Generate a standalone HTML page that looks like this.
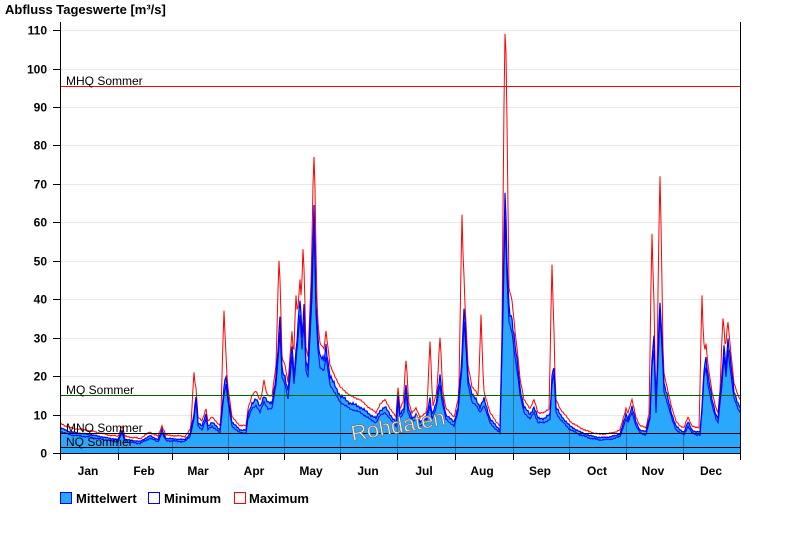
<!DOCTYPE html>
<html><head><meta charset="utf-8"><style>
body{margin:0;background:#fff;width:800px;height:550px;overflow:hidden;font-family:"Liberation Sans",Arial,sans-serif}
</style></head><body>
<svg id="s" width="800" height="550" xmlns="http://www.w3.org/2000/svg" style="position:absolute;left:0;top:0">
<text x="5" y="14" font-size="13" font-weight="bold" font-family="Liberation Sans">Abfluss Tageswerte [m³/s]</text>
<g id="grid" stroke="#e8e8e8" stroke-width="1"></g>
<g id="ylab" font-size="12" font-weight="bold" text-anchor="end" font-family="Liberation Sans"></g>
<defs><clipPath id="cp"><path id="cpp"/></clipPath></defs>
<path id="fill" fill="#29a8fc" stroke="none"/>
<g id="vl" clip-path="url(#cp)" stroke="#2f6f9f" stroke-width="1"></g>
<path id="pmax" fill="none" stroke="#ff0000" stroke-width="1"/>
<path id="pmin" fill="none" stroke="#0000ff" stroke-width="1"/>
<path id="pmean" fill="none" stroke="#0000ff" stroke-width="1.2"/>
<line x1="60" x2="740" y1="86.5" y2="86.5" stroke="#ff0000"/>
<line x1="60" x2="740" y1="395.5" y2="395.5" stroke="#006400"/>
<line x1="60" x2="740" y1="433.5" y2="433.5" stroke="#000"/>
<line x1="60" x2="740" y1="447.5" y2="447.5" stroke="#000"/>
<g font-size="12" font-family="Liberation Sans">
<text x="66" y="85">MHQ Sommer</text>
<text x="66" y="394">MQ Sommer</text>
<text x="66" y="432">MNQ Sommer</text>
<text x="66" y="446">NQ Sommer</text>
</g>
<text x="398" y="433" font-size="22" fill="#fff" stroke="#777" stroke-width="0.9" text-anchor="middle" transform="rotate(-10 398 425)" font-family="Liberation Sans">Rohdaten</text>
<line x1="60.5" y1="22" x2="60.5" y2="460" stroke="#000"/>
<line x1="740.5" y1="22" x2="740.5" y2="453" stroke="#000"/>
<line x1="60" y1="453.5" x2="741" y2="453.5" stroke="#000"/>
<g id="ticks" stroke="#000"></g>
<g font-size="12" font-weight="bold" text-anchor="middle" font-family="Liberation Sans">
<text x="88" y="475">Jan</text><text x="144" y="475">Feb</text><text x="198" y="475">Mar</text><text x="254" y="475">Apr</text><text x="311" y="475">May</text><text x="368" y="475">Jun</text><text x="424" y="475">Jul</text><text x="482" y="475">Aug</text><text x="540" y="475">Sep</text><text x="597" y="475">Oct</text><text x="653" y="475">Nov</text><text x="711" y="475">Dec</text>
</g>
<rect x="60.5" y="492.5" width="11" height="11" fill="#29a8fc" stroke="#0000ff"/>
<rect x="148.5" y="492.5" width="11" height="11" fill="#fff" stroke="#0000ff"/>
<rect x="234.5" y="492.5" width="11" height="11" fill="#fff" stroke="#ff0000"/>
<g font-size="13" font-weight="bold" font-family="Liberation Sans">
<text x="76" y="503">Mittelwert</text><text x="164" y="503">Minimum</text><text x="249" y="503">Maximum</text>
</g>
</svg>
<script>
var Y=function(v){return 453-3.845*v};
var g=document.getElementById('grid'),yl=document.getElementById('ylab'),tk=document.getElementById('ticks');
var ns='http://www.w3.org/2000/svg';
function el(p,t,a){var e=document.createElementNS(ns,t);for(var k in a)e.setAttribute(k,a[k]);p.appendChild(e);return e}
for(var v=0;v<=110;v+=10){var y=Math.round(Y(v))+0.5;if(v>0)el(g,'line',{x1:61,x2:740,y1:y,y2:y});el(tk,'line',{x1:53,x2:60,y1:y,y2:y});var t=el(yl,'text',{x:47,y:y+4});t.textContent=v;}
var mb=[60,118,172,228,284,340,397,455,513,569,626,683,740];
var vl=document.getElementById('vl');
mb.forEach(function(x){el(tk,'line',{x1:x+0.5,x2:x+0.5,y1:453,y2:460});if(x>60&&x<740)el(vl,'line',{x1:x+0.5,x2:x+0.5,y1:20,y2:453});});
var K=[[60,6.5],[70,5.5],[90,4.8],[110,3.8],[118,3.5],[122,6],[125,3.5],[140,3],[150,4.5],[158,3.5],[162,6],[166,3.8],[185,3.5],[190,5],[194,10],[196,15],[198,8],[202,7],[206,10],[208,7],[212,8],[216,7],[220,6],[224,17],[226,20],[228,15],[232,8],[240,6],[246,6],[248,10],[252,13],[256,14],[260,12],[264,15],[268,13],[272,13],[276,20],[278,27],[280,35],[282,22],[285,20],[288,16],[290,22],[292,28],[294,20],[297,30],[300,40],[302,30],[304,38],[306,24],[308,22],[312,45],[314,65],[316,40],[318,30],[320,25],[324,24],[326,28],[330,20],[340,15],[350,13],[360,12],[370,10],[376,9],[380,11],[385,12],[390,10],[396,8],[398,15],[400,10],[404,12],[406,18],[408,12],[412,9],[416,10],[420,8],[426,9],[430,14],[432,10],[436,13],[440,20],[442,15],[446,10],[450,9],[454,8],[458,12],[462,25],[464,38],[466,30],[468,20],[472,15],[476,14],[480,12],[484,14],[490,9],[496,7],[500,6],[503,40],[505,68],[507,50],[509,38],[512,35],[515,28],[518,22],[520,17],[524,12],[530,10],[534,12],[538,9],[544,9],[550,10],[552,20],[554,23],[556,12],[560,10],[570,7],[580,5.5],[590,4.5],[600,4],[610,4.2],[615,4.5],[620,5],[626,10],[628,9],[632,12],[636,8],[640,6],[646,5.5],[650,10],[652,25],[654,30],[656,12],[660,40],[662,30],[664,18],[668,14],[672,10],[676,7],[680,6],[684,5.5],[688,8],[692,6],[696,5.5],[700,5.5],[702,12],[704,22],[706,25],[708,20],[712,14],[716,10],[718,9],[722,20],[724,28],[726,22],[728,30],[730,25],[734,16],[738,13],[740,12]];
var S=[[505,109],[506,104],[314,77],[660,72],[462,62],[303,53],[279,50],[552,49],[702,41],[723,35],[652,57],[224,37],[194,21],[430,29],[481,36],[296,41],[440,30],[406,24],[264,19],[727,32]];
function mean0(x){for(var i=1;i<K.length;i++){if(x<=K[i][0]){var a=K[i-1],b=K[i];return a[1]+(b[1]-a[1])*(x-a[0])/(b[0]-a[0]);}}return 12}
function nz(x){return Math.sin(x*2.3)*0.5+Math.sin(x*5.7+1)*0.3}
function mean(x){var m=mean0(x);return m*(1+0.05*nz(x));}
function mx(x){var m=mean0(x)*1.12+0.4+0.3*nz(x+3);S.forEach(function(s){var d=Math.abs(x-s[0]);if(d<3){var v=s[1]-(s[1]-mean0(x))*d/3;if(v>m)m=v;}});return m}
var pm='',pM='',pn='';
for(var x=60;x<=740;x+=1){var m=mean(x);pm+=(x==60?'M':'L')+x+','+Y(m).toFixed(1);pM+=(x==60?'M':'L')+x+','+Y(mx(x)).toFixed(1);pn+=(x==60?'M':'L')+x+','+Y(mean0(x)*0.9-0.2+0.3*nz(x+7)).toFixed(1);}
document.getElementById('pmean').setAttribute('d',pm);
document.getElementById('pmax').setAttribute('d',pM);
document.getElementById('pmin').setAttribute('d',pn);
var f=pm+'L740,453L60,453Z';
document.getElementById('fill').setAttribute('d',f);
document.getElementById('cpp').setAttribute('d',f);
</script>
</body></html>
